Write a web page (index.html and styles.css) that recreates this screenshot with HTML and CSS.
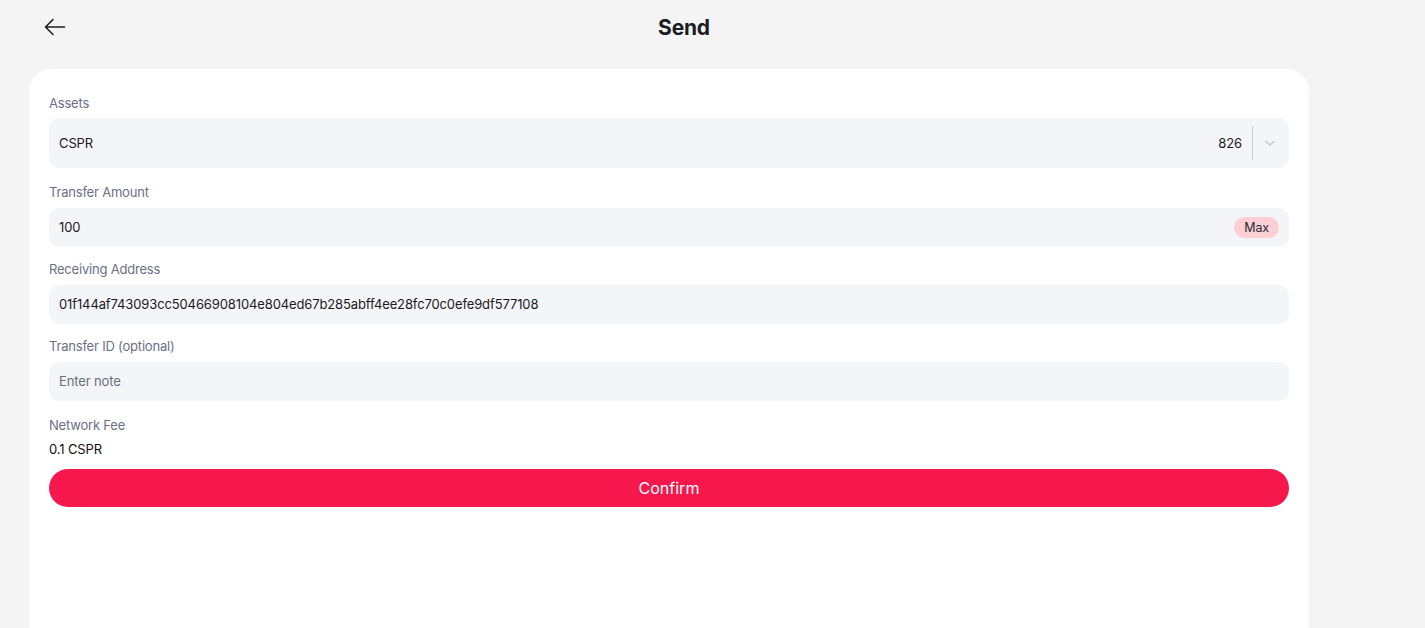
FILE: index.html
```html
<!DOCTYPE html>
<html>
<head>
<meta charset="utf-8">
<link rel="stylesheet" href="styles.css">
</head>
<body>
<div class="page">
  <header class="header">
    <button class="back" aria-label="Back">
      <svg width="24" height="24" viewBox="0 0 24 24" fill="none" stroke="#1f1f24" stroke-width="1.6" stroke-linecap="round" stroke-linejoin="round"><path d="M21.5 12H2.5M10 4.5L2.5 12L10 19.5"/></svg>
    </button>
    <h1 class="title">Send</h1>
    <span class="spacer"></span>
  </header>
  <main class="card">
    <div class="field field-first">
      <label class="label">Assets</label>
      <div class="select">
        <span class="value">CSPR</span>
        <span class="balance">826</span>
        <span class="divider"></span>
        <svg class="chev" width="14" height="14" viewBox="0 0 14 14" fill="none" stroke="#c5c7cc" stroke-width="1.6" stroke-linecap="round" stroke-linejoin="round"><path d="M3 5.5L7 9L11 5.5"/></svg>
      </div>
    </div>
    <div class="field">
      <label class="label">Transfer Amount</label>
      <div class="input">
        <span class="value">100</span>
        <span class="max">Max</span>
      </div>
    </div>
    <div class="field">
      <label class="label">Receiving Address</label>
      <div class="input">
        <span class="value">01f144af743093cc50466908104e804ed67b285abff4ee28fc70c0efe9df577108</span>
      </div>
    </div>
    <div class="field">
      <label class="label">Transfer ID (optional)</label>
      <div class="input">
        <span class="placeholder">Enter note</span>
      </div>
    </div>
    <div class="fee">
      <span class="label">Network Fee</span>
      <span class="fee-value">0.1 CSPR</span>
    </div>
    <button class="confirm">Confirm</button>
  </main>
</div>
</body>
</html>
```

FILE: styles.css
```css
* { box-sizing: border-box; }
html, body { margin: 0; padding: 0; }
body {
  background: #f4f4f4;
  font-family: Inter, "Noto Sans", sans-serif;
  color: #1a1a1f;
  height: 628px;
  overflow: hidden;
}
.page {
  width: 1280px;
  margin-left: 29px;
  display: flex;
  flex-direction: column;
}
.header {
  height: 69px;
  display: flex;
  align-items: flex-start;
  padding: 16px 0 0 14px;
  width: 1310px;
}
.back {
  border: 0;
  background: none;
  padding: 0;
  width: 24px;
  height: 24px;
  margin-top: -1px;
  display: flex;
  cursor: pointer;
}
.title {
  flex: 1;
  margin: 0;
  text-align: center;
  font-size: 21px;
  font-weight: 700;
  line-height: 24px;
  color: #1c1c24;
  padding-right: 24px;
  letter-spacing: -0.2px;
}
.spacer { width: 14px; }
.card {
  background: #fff;
  border-radius: 22px 22px 0 0;
  padding: 26px 20px 120px;
  display: flex;
  flex-direction: column;
  min-height: 559px;
}
.field {
  display: flex;
  flex-direction: column;
  margin-bottom: 14.5px;
}
.field-first { margin-bottom: 16px; }
.label {
  font-size: 13px;
  line-height: 16px;
  color: #6b7085;
  margin-bottom: 8px;
  letter-spacing: -0.2px;
}
.field-first .label { margin-bottom: 7px; }
.select, .input {
  background: #f4f5f8;
  border-radius: 10px;
  display: flex;
  align-items: center;
  padding: 0 10px;
  font-size: 13px;
  color: #1a1a1f;
  letter-spacing: -0.12px;
}
.select { height: 50px; padding-right: 12px; }
.input { height: 38.5px; }
.value { flex: 1; }
.balance { margin-right: 10px; }
.divider {
  width: 1px;
  height: 34px;
  background: #c9cace;
  margin-right: 10px;
}
.chev { display: block; }
.max {
  background: #fbcfd4;
  border-radius: 999px;
  padding: 3px 10px;
  font-size: 12.5px;
  color: #2a2a30;
  line-height: 15px;
}
.placeholder { color: #6b6f7a; flex: 1; }
.fee {
  display: flex;
  flex-direction: column;
  margin-top: 2px;
}
.fee .label { margin-bottom: 8px; }
.fee-value {
  font-size: 13px;
  line-height: 16px;
  color: #111;
  letter-spacing: -0.12px;
}
.confirm {
  margin-top: 12px;
  height: 38px;
  border: 0;
  border-radius: 999px;
  background: #f6174c;
  color: #fff;
  font-family: Inter, "Noto Sans", sans-serif;
  font-size: 16px;
  cursor: pointer;
}
```
